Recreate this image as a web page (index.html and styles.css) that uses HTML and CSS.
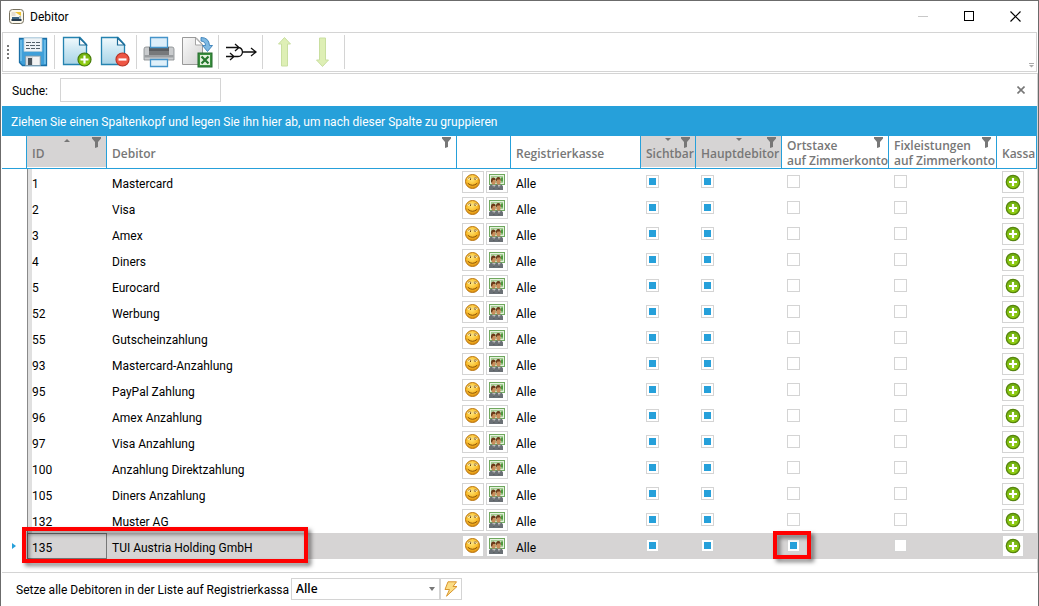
FILE: index.html
```html
<!DOCTYPE html>
<html lang="de">
<head>
<meta charset="utf-8">
<title>Debitor</title>
<link rel="stylesheet" href="styles.css">
</head>
<body>
<svg class="sprite" aria-hidden="true">
  <defs>
    <radialGradient id="g-gold" cx="45%" cy="35%" r="65%"><stop offset="0" stop-color="#ffe67a"/><stop offset=".6" stop-color="#fbbf2c"/><stop offset="1" stop-color="#d98a0c"/></radialGradient>
    <linearGradient id="g-page" x1="0" y1="0" x2="0" y2="1"><stop offset="0" stop-color="#f2fafd"/><stop offset=".5" stop-color="#c9e6f2"/><stop offset="1" stop-color="#a9d3e6"/></linearGradient>
    <linearGradient id="g-grey" x1="0" y1="0" x2="1" y2="1"><stop offset="0" stop-color="#fafafa"/><stop offset="1" stop-color="#d2d2d2"/></linearGradient>
    <linearGradient id="g-green" x1="0" y1="0" x2="0" y2="1"><stop offset="0" stop-color="#6fae12"/><stop offset="1" stop-color="#96d312"/></linearGradient>
  </defs>
  <symbol id="smile" viewBox="0 0 16 16">
    <circle cx="7.500" cy="7.500" r="7" fill="url(#g-gold)" stroke="#b87512"/>
    <path d="M2.800 5.300q1.700-2 3.600-.2M8.700 5.100q1.900-1.800 3.600.2" fill="none" stroke="#fff6c4" stroke-width="2.200"/>
    <path d="M2.800 4.500q1.700-1.600 3.600-.2M8.700 4.300q1.900-1.400 3.600.2" fill="none" stroke="#9a6410" stroke-width=".8"/>
    <path d="M5.500 4.500v1.500M10 4.500v1.500" stroke="#6b4208"/>
    <path d="M2.800 9.300q4.700 4 9.400 0" fill="none" stroke="#8a5208"/>
  </symbol>
  <symbol id="people" viewBox="0 0 16 16">
    <rect x=".5" y=".5" width="15" height="10" fill="#e4f1dc" stroke="#6fa85e"/>
    <rect x="2.500" y="2.500" width="11" height="6" fill="#c6e2b8" stroke="#a3cc94"/>
    <rect x="12" y="3.500" width="2" height="4" fill="#4f9a3e"/>
    <path d="M0 16v-3.500q1-2 3.500-2h2l1 1 1-1H11q2.500 0 3 2V16z" fill="#6a7075"/>
    <path d="M3.500 11l1.200 4 1.200-4zM9 11l1.200 4 1.200-4z" fill="#eee"/>
    <path d="M4.700 11.500v3.500M10.200 11.500v3.500" stroke="#333" stroke-width=".7"/>
    <rect x="2.500" y="5.500" width="4" height="5" rx="1.500" fill="#c98c5a"/>
    <rect x="7.500" y="5" width="4" height="5.500" rx="1.500" fill="#c98c5a"/>
    <path d="M2 8Q1.500 3.500 4.500 3.500 6.700 3.500 6.700 6L4 6 3 8.500zM6.800 8Q6.500 3 9.500 3 12 3 11.800 7.500L11 5.500H8.500z" fill="#6b3a1a"/>
  </symbol>
  <symbol id="plus" viewBox="0 0 16 16">
    <circle cx="8" cy="8" r="6.700" fill="url(#g-green)" stroke="#57850f" stroke-width="1.300"/>
    <path d="M8 4v8M4 8h8" stroke="#fff" stroke-width="2.200"/>
  </symbol>
  <symbol id="funnel" viewBox="0 0 9 11">
    <path d="M0 0h9v1.500L6 5v5l-3 1V5L0 1.500z" fill="#777"/>
  </symbol>
  <symbol id="page" viewBox="0 0 32 32">
    <path d="M2.500 1.500H19l6.500 7V28.500H2.500z" fill="url(#g-page)" stroke="#2583b0" stroke-width="1.300"/>
    <path d="M18.500 2v7h7z" fill="#fff" stroke="#1c6c98" stroke-width="1.200"/>
  </symbol>
</svg>

<div class="window">
  <header class="titlebar">
    <svg class="app-icon" viewBox="0 0 15 15" aria-hidden="true">
      <rect x=".5" y=".5" width="14" height="14" rx="3" fill="#fbf8ec" stroke="#77715f"/>
      <rect x="2.500" y="3" width="4" height="4" fill="#e4ddd0"/><path d="M6 3h6v4l-3-2z" fill="#eec333"/>
      <path d="M3 8h7v2H3z" fill="#3c6482"/><path d="M2.500 10h10v2h-10z" fill="#26394a"/><path d="M10 7h2v3h-2z" fill="#a4b9c6"/>
    </svg>
    <h1 class="title">Debitor</h1>
    <button class="win-btn" type="button" aria-label="Minimieren" disabled><svg viewBox="0 0 11 11"><path d="M0 5.500h10" stroke="#c8c8c8"/></svg></button>
    <button class="win-btn" type="button" aria-label="Maximieren"><svg viewBox="0 0 11 11"><rect x=".5" y=".5" width="9" height="9" fill="none" stroke="#000"/></svg></button>
    <button class="win-btn" type="button" aria-label="Schließen"><svg viewBox="0 0 11 11"><path d="M.5.5l10 10M10.500.5l-10 10" stroke="#000" stroke-width="1.200"/></svg></button>
  </header>

  <div class="toolbar" role="toolbar" aria-label="Debitor">
    <span class="grip"></span>
    <button class="tool" type="button" aria-label="Speichern"><svg viewBox="0 0 32 32">
      <path d="M2.500 2.500h27v27h-24l-3-3z" fill="#3f9fd9" stroke="#1b6fa6" stroke-width="1.300"/>
      <path d="M4 4v21M28 4v24" stroke="#83cbef" stroke-width="1.200"/>
      <path d="M7 2h18v13.500H7z" fill="#eef3f6" stroke="#a9c7d8" stroke-width=".7"/>
      <path d="M9 6.500h5m1 0h3m1 0h4M9 9.500h3m1 0h5m1 0h4M9 12.500h4m1 0h4m1 0h4" stroke="#54626b"/>
      <path d="M8.500 20h15v9.500h-15z" fill="#d9dde0" stroke="#7b99ab" stroke-width=".8"/>
      <path d="M11 22h4v7h-4z" fill="#4a545c"/><path d="M16 21h6v8h-6z" fill="#f3f3f3"/>
    </svg></button>
    <span class="sep"></span>
    <button class="tool" type="button" aria-label="Neu"><svg viewBox="0 0 32 32">
      <use href="#page"/><circle cx="23.500" cy="23.500" r="6.500" fill="url(#g-green)" stroke="#467b08" stroke-width="1.200"/>
      <path d="M23.500 19.500v8M19.500 23.500h8" stroke="#fff" stroke-width="2.200"/>
    </svg></button>
    <button class="tool" type="button" aria-label="Löschen"><svg viewBox="0 0 32 32">
      <use href="#page"/><circle cx="23.500" cy="23.500" r="6.500" fill="#ee5644" stroke="#b93527" stroke-width="1.200"/>
      <path d="M19.500 23.500h8" stroke="#fff" stroke-width="2.200"/>
    </svg></button>
    <span class="sep"></span>
    <button class="tool" type="button" aria-label="Drucken"><svg viewBox="0 0 32 32">
      <path d="M3 11h26q2 0 2 2v11H1V13q0-2 2-2z" fill="#c9cbcd" stroke="#84888b" stroke-width=".8"/>
      <path d="M6 11h20v5H6z" fill="#5a5c5f"/><path d="M1.500 19h29v2.500h-29z" fill="#9b9ea1"/><path d="M6 15h20v4H6z" fill="#77797b"/>
      <path d="M7.500 1.500h17v10h-17z" fill="#dceefa" stroke="#4594c9" stroke-width="1.300"/>
      <path d="M7.500 23.500h17v7h-17z" fill="#dff0fa" stroke="#4594c9" stroke-width="1.300"/>
    </svg></button>
    <button class="tool" type="button" aria-label="Excel-Export"><svg viewBox="0 0 32 32">
      <path d="M1.500 1.500H15l6.500 7V28.500H1.500z" fill="url(#g-grey)" stroke="#999"/>
      <path d="M14.500 2v7h7z" fill="#fff" stroke="#a5a5a5"/>
      <path d="M20 1.500q8 0 8.500 8h3l-5 6-5-6h3q0-4-4.500-4.500z" fill="#7fb9e2" stroke="#3a7fb8" stroke-width=".9"/>
      <rect x="17" y="17" width="14" height="14" fill="#3c9140" stroke="#246a2c"/>
      <rect x="19" y="19" width="10" height="10" fill="#e4f2df"/>
      <path d="M20.500 20.500l7 7m0-7l-7 7" stroke="#26772e" stroke-width="2.200"/>
    </svg></button>
    <span class="sep"></span>
    <button class="tool" type="button" aria-label="Zusammenführen"><svg viewBox="0 0 32 32" fill="none" stroke="#111" stroke-width="1.300">
      <path d="M1 11.500h12q4 0 4.500 4.500h13M4 20.500h9q4 0 4.500-4.500M1 20.500h4M10 8l4 3.500-4 3.500M5 17l4 3.500L5 24M26 12l5 4-5 4"/>
    </svg></button>
    <span class="sep"></span>
    <button class="tool" type="button" aria-label="Nach oben"><svg viewBox="0 0 32 32"><path d="M15.500 1.500l6 6.500h-3v22h-6V8h-3z" fill="#deefb5" stroke="#c9dfa0" stroke-linejoin="round"/></svg></button>
    <button class="tool" type="button" aria-label="Nach unten"><svg viewBox="0 0 32 32"><path d="M15.500 30.500l6-6.500h-3V2h-6v22h-3z" fill="#deefb5" stroke="#c9dfa0" stroke-linejoin="round"/></svg></button>
    <span class="sep"></span>
    <svg class="overflow" viewBox="0 0 5 5" aria-hidden="true"><path d="M0 .5h5" stroke="#aaa"/><path d="M0 2h5L2.500 4.500z" fill="#aaa"/></svg>
  </div>

  <main class="grid">
    <div class="search">
      <label for="q">Suche:</label>
      <input class="search-box" id="q" type="text">
      <button class="search-close" type="button" aria-label="Suche schließen"><svg viewBox="0 0 8 8"><path d="M.5.5l7 7m0-7l-7 7" stroke="#777" stroke-width="1.600"/></svg></button>
    </div>
    <div class="group-bar">Ziehen Sie einen Spaltenkopf und legen Sie ihn hier ab, um nach dieser Spalte zu gruppieren</div>
    <table class="data">
      <colgroup><col class="c-mark"><col class="c-id"><col><col class="c-act"><col class="c-reg"><col class="c-vis"><col class="c-main"><col class="c-tax"><col class="c-fix"><col class="c-kassa"></colgroup>
      <thead>
        <tr>
          <th></th>
          <th class="sorted"><span class="sort up"></span><svg class="funnel"><use href="#funnel"/></svg>ID</th>
          <th><svg class="funnel"><use href="#funnel"/></svg>Debitor</th>
          <th></th>
          <th>Registrierkasse</th>
          <th class="sorted"><span class="sort down"></span><svg class="funnel"><use href="#funnel"/></svg>Sichtbar</th>
          <th class="sorted"><span class="sort down"></span><svg class="funnel"><use href="#funnel"/></svg>Hauptdebitor</th>
          <th><svg class="funnel"><use href="#funnel"/></svg>Ortstaxe<br>auf Zimmerkonto</th>
          <th><svg class="funnel"><use href="#funnel"/></svg>Fixleistungen<br>auf Zimmerkonto</th>
          <th>Kassa</th>
        </tr>
      </thead>
      <tbody>
        <tr><td></td><td>1</td><td>Mastercard</td><td><div class="actions"><button class="cell-btn" type="button" aria-label="Gast"><svg><use href="#smile"/></svg></button><button class="cell-btn" type="button" aria-label="Zahlung"><svg><use href="#people"/></svg></button></div></td><td>Alle</td><td><input type="checkbox" aria-label="Sichtbar" checked></td><td><input type="checkbox" aria-label="Hauptdebitor" checked></td><td><input type="checkbox" aria-label="Ortstaxe"></td><td><input type="checkbox" aria-label="Fixleistungen"></td><td><button class="cell-btn" type="button" aria-label="Kassa"><svg><use href="#plus"/></svg></button></td></tr>
        <tr><td></td><td>2</td><td>Visa</td><td><div class="actions"><button class="cell-btn" type="button" aria-label="Gast"><svg><use href="#smile"/></svg></button><button class="cell-btn" type="button" aria-label="Zahlung"><svg><use href="#people"/></svg></button></div></td><td>Alle</td><td><input type="checkbox" aria-label="Sichtbar" checked></td><td><input type="checkbox" aria-label="Hauptdebitor" checked></td><td><input type="checkbox" aria-label="Ortstaxe"></td><td><input type="checkbox" aria-label="Fixleistungen"></td><td><button class="cell-btn" type="button" aria-label="Kassa"><svg><use href="#plus"/></svg></button></td></tr>
        <tr><td></td><td>3</td><td>Amex</td><td><div class="actions"><button class="cell-btn" type="button" aria-label="Gast"><svg><use href="#smile"/></svg></button><button class="cell-btn" type="button" aria-label="Zahlung"><svg><use href="#people"/></svg></button></div></td><td>Alle</td><td><input type="checkbox" aria-label="Sichtbar" checked></td><td><input type="checkbox" aria-label="Hauptdebitor" checked></td><td><input type="checkbox" aria-label="Ortstaxe"></td><td><input type="checkbox" aria-label="Fixleistungen"></td><td><button class="cell-btn" type="button" aria-label="Kassa"><svg><use href="#plus"/></svg></button></td></tr>
        <tr><td></td><td>4</td><td>Diners</td><td><div class="actions"><button class="cell-btn" type="button" aria-label="Gast"><svg><use href="#smile"/></svg></button><button class="cell-btn" type="button" aria-label="Zahlung"><svg><use href="#people"/></svg></button></div></td><td>Alle</td><td><input type="checkbox" aria-label="Sichtbar" checked></td><td><input type="checkbox" aria-label="Hauptdebitor" checked></td><td><input type="checkbox" aria-label="Ortstaxe"></td><td><input type="checkbox" aria-label="Fixleistungen"></td><td><button class="cell-btn" type="button" aria-label="Kassa"><svg><use href="#plus"/></svg></button></td></tr>
        <tr><td></td><td>5</td><td>Eurocard</td><td><div class="actions"><button class="cell-btn" type="button" aria-label="Gast"><svg><use href="#smile"/></svg></button><button class="cell-btn" type="button" aria-label="Zahlung"><svg><use href="#people"/></svg></button></div></td><td>Alle</td><td><input type="checkbox" aria-label="Sichtbar" checked></td><td><input type="checkbox" aria-label="Hauptdebitor" checked></td><td><input type="checkbox" aria-label="Ortstaxe"></td><td><input type="checkbox" aria-label="Fixleistungen"></td><td><button class="cell-btn" type="button" aria-label="Kassa"><svg><use href="#plus"/></svg></button></td></tr>
        <tr><td></td><td>52</td><td>Werbung</td><td><div class="actions"><button class="cell-btn" type="button" aria-label="Gast"><svg><use href="#smile"/></svg></button><button class="cell-btn" type="button" aria-label="Zahlung"><svg><use href="#people"/></svg></button></div></td><td>Alle</td><td><input type="checkbox" aria-label="Sichtbar" checked></td><td><input type="checkbox" aria-label="Hauptdebitor" checked></td><td><input type="checkbox" aria-label="Ortstaxe"></td><td><input type="checkbox" aria-label="Fixleistungen"></td><td><button class="cell-btn" type="button" aria-label="Kassa"><svg><use href="#plus"/></svg></button></td></tr>
        <tr><td></td><td>55</td><td>Gutscheinzahlung</td><td><div class="actions"><button class="cell-btn" type="button" aria-label="Gast"><svg><use href="#smile"/></svg></button><button class="cell-btn" type="button" aria-label="Zahlung"><svg><use href="#people"/></svg></button></div></td><td>Alle</td><td><input type="checkbox" aria-label="Sichtbar" checked></td><td><input type="checkbox" aria-label="Hauptdebitor" checked></td><td><input type="checkbox" aria-label="Ortstaxe"></td><td><input type="checkbox" aria-label="Fixleistungen"></td><td><button class="cell-btn" type="button" aria-label="Kassa"><svg><use href="#plus"/></svg></button></td></tr>
        <tr><td></td><td>93</td><td>Mastercard-Anzahlung</td><td><div class="actions"><button class="cell-btn" type="button" aria-label="Gast"><svg><use href="#smile"/></svg></button><button class="cell-btn" type="button" aria-label="Zahlung"><svg><use href="#people"/></svg></button></div></td><td>Alle</td><td><input type="checkbox" aria-label="Sichtbar" checked></td><td><input type="checkbox" aria-label="Hauptdebitor" checked></td><td><input type="checkbox" aria-label="Ortstaxe"></td><td><input type="checkbox" aria-label="Fixleistungen"></td><td><button class="cell-btn" type="button" aria-label="Kassa"><svg><use href="#plus"/></svg></button></td></tr>
        <tr><td></td><td>95</td><td>PayPal Zahlung</td><td><div class="actions"><button class="cell-btn" type="button" aria-label="Gast"><svg><use href="#smile"/></svg></button><button class="cell-btn" type="button" aria-label="Zahlung"><svg><use href="#people"/></svg></button></div></td><td>Alle</td><td><input type="checkbox" aria-label="Sichtbar" checked></td><td><input type="checkbox" aria-label="Hauptdebitor" checked></td><td><input type="checkbox" aria-label="Ortstaxe"></td><td><input type="checkbox" aria-label="Fixleistungen"></td><td><button class="cell-btn" type="button" aria-label="Kassa"><svg><use href="#plus"/></svg></button></td></tr>
        <tr><td></td><td>96</td><td>Amex Anzahlung</td><td><div class="actions"><button class="cell-btn" type="button" aria-label="Gast"><svg><use href="#smile"/></svg></button><button class="cell-btn" type="button" aria-label="Zahlung"><svg><use href="#people"/></svg></button></div></td><td>Alle</td><td><input type="checkbox" aria-label="Sichtbar" checked></td><td><input type="checkbox" aria-label="Hauptdebitor" checked></td><td><input type="checkbox" aria-label="Ortstaxe"></td><td><input type="checkbox" aria-label="Fixleistungen"></td><td><button class="cell-btn" type="button" aria-label="Kassa"><svg><use href="#plus"/></svg></button></td></tr>
        <tr><td></td><td>97</td><td>Visa Anzahlung</td><td><div class="actions"><button class="cell-btn" type="button" aria-label="Gast"><svg><use href="#smile"/></svg></button><button class="cell-btn" type="button" aria-label="Zahlung"><svg><use href="#people"/></svg></button></div></td><td>Alle</td><td><input type="checkbox" aria-label="Sichtbar" checked></td><td><input type="checkbox" aria-label="Hauptdebitor" checked></td><td><input type="checkbox" aria-label="Ortstaxe"></td><td><input type="checkbox" aria-label="Fixleistungen"></td><td><button class="cell-btn" type="button" aria-label="Kassa"><svg><use href="#plus"/></svg></button></td></tr>
        <tr><td></td><td>100</td><td>Anzahlung Direktzahlung</td><td><div class="actions"><button class="cell-btn" type="button" aria-label="Gast"><svg><use href="#smile"/></svg></button><button class="cell-btn" type="button" aria-label="Zahlung"><svg><use href="#people"/></svg></button></div></td><td>Alle</td><td><input type="checkbox" aria-label="Sichtbar" checked></td><td><input type="checkbox" aria-label="Hauptdebitor" checked></td><td><input type="checkbox" aria-label="Ortstaxe"></td><td><input type="checkbox" aria-label="Fixleistungen"></td><td><button class="cell-btn" type="button" aria-label="Kassa"><svg><use href="#plus"/></svg></button></td></tr>
        <tr><td></td><td>105</td><td>Diners Anzahlung</td><td><div class="actions"><button class="cell-btn" type="button" aria-label="Gast"><svg><use href="#smile"/></svg></button><button class="cell-btn" type="button" aria-label="Zahlung"><svg><use href="#people"/></svg></button></div></td><td>Alle</td><td><input type="checkbox" aria-label="Sichtbar" checked></td><td><input type="checkbox" aria-label="Hauptdebitor" checked></td><td><input type="checkbox" aria-label="Ortstaxe"></td><td><input type="checkbox" aria-label="Fixleistungen"></td><td><button class="cell-btn" type="button" aria-label="Kassa"><svg><use href="#plus"/></svg></button></td></tr>
        <tr><td></td><td>132</td><td>Muster AG</td><td><div class="actions"><button class="cell-btn" type="button" aria-label="Gast"><svg><use href="#smile"/></svg></button><button class="cell-btn" type="button" aria-label="Zahlung"><svg><use href="#people"/></svg></button></div></td><td>Alle</td><td><input type="checkbox" aria-label="Sichtbar" checked></td><td><input type="checkbox" aria-label="Hauptdebitor" checked></td><td><input type="checkbox" aria-label="Ortstaxe"></td><td><input type="checkbox" aria-label="Fixleistungen"></td><td><button class="cell-btn" type="button" aria-label="Kassa"><svg><use href="#plus"/></svg></button></td></tr>
        <tr class="selected"><td><span class="marker"></span></td><td>135<span class="callout callout-name"></span></td><td>TUI Austria Holding GmbH</td><td><div class="actions"><button class="cell-btn" type="button" aria-label="Gast"><svg><use href="#smile"/></svg></button><button class="cell-btn" type="button" aria-label="Zahlung"><svg><use href="#people"/></svg></button></div></td><td>Alle</td><td><input type="checkbox" aria-label="Sichtbar" checked></td><td><input type="checkbox" aria-label="Hauptdebitor" checked></td><td><input type="checkbox" aria-label="Ortstaxe" checked><span class="callout callout-check"></span></td><td><input type="checkbox" aria-label="Fixleistungen"></td><td><button class="cell-btn" type="button" aria-label="Kassa"><svg><use href="#plus"/></svg></button></td></tr>
      </tbody>
    </table>
  </main>

  <footer class="footer">
    <label for="kassa">Setze alle Debitoren in der Liste auf Registrierkassa</label>
    <div class="combo">
      <span class="combo-field"><select id="kassa"><option>Alle</option></select></span>
      <button class="cell-btn" type="button" aria-label="Anwenden"><svg viewBox="0 0 16 16"><path d="M5 .8h8.500L10 5.500h4L3.500 15.200 6.500 8.500H2z" fill="#fbdc83" stroke="#d9962f" stroke-linejoin="round"/></svg></button>
    </div>
  </footer>
</div>
</body>
</html>
```
FILE: styles.css
```css
:root {
  --blue: #26a0da;
  --line: #d4d4d4;
  --shade: #d6d4d4;
  --frame: #6b6b6b;
  --heading: "Open Sans", "Noto Sans", sans-serif;
}

* { box-sizing: border-box; }

body {
  margin: 0;
  background: #fff;
  color: #000;
  font: 12px/16px Roboto, "Open Sans", sans-serif;
}

button, input, select { font: inherit; color: inherit; margin: 0; }
button { padding: 0; border: 0; background: none; }
svg { display: block; }
.sprite { position: absolute; width: 0; height: 0; }

.window {
  min-height: 100vh;
  border: solid var(--frame);
  border-width: 1px 1px 0;
}

.titlebar { display: flex; align-items: center; height: 30px; padding-left: 8px; }
.app-icon { width: 15px; height: 15px; }
.title { flex: 1; margin: 0 0 0 6px; padding-top: 1px; font-size: 12px; font-weight: 400; }
.win-btn { display: flex; justify-content: center; width: 46px; }
.win-btn svg { width: 11px; height: 11px; }

.toolbar {
  display: flex;
  align-items: center;
  height: 40px;
  margin: 1px;
  padding-left: 4px;
  border: 1px solid var(--line);
}
.grip {
  width: 2px;
  height: 14px;
  margin-right: 5px;
  background: repeating-linear-gradient(#777 0 2px, transparent 2px 4px);
}
.tool { display: flex; justify-content: center; width: 38px; }
.tool svg { width: 32px; height: 32px; }
.sep { width: 1px; height: 34px; margin: 0 3px 0 2px; background: var(--line); }
.overflow { width: 5px; height: 5px; margin: auto 2px 3px auto; }

.grid {
  margin-left: 1px;
  padding-bottom: 13px;
  border: 1px solid var(--line);
  border-left: 0;
}

.search { display: flex; align-items: center; height: 32px; padding: 0 12px 0 10px; }
.search label { width: 48px; padding-top: 2px; }
.search-box { width: 161px; height: 24px; padding: 0 4px; border: 1px solid var(--line); }
.search-close { margin-left: auto; }
.search-close svg { width: 8px; height: 8px; }

.group-bar { padding: 8px 9px 6px; background: var(--blue); color: #fff; }

.data { width: 100%; table-layout: fixed; border-collapse: separate; border-spacing: 0; }
.c-mark { width: 25px; }
.c-id { width: 80px; }
.c-act { width: 54px; }
.c-reg { width: 130px; }
.c-vis { width: 55px; }
.c-main { width: 86px; }
.c-tax { width: 107px; }
.c-fix { width: 108px; }
.c-kassa { width: 40px; }

.data th {
  position: relative;
  height: 33px;
  padding: 2px 0 0 5px;
  border: solid var(--blue);
  border-width: 0 1px 1px 0;
  color: #777;
  font: 600 12px/15px var(--heading);
  text-align: left;
  white-space: nowrap;
}
.data th.sorted { background: linear-gradient(var(--shade), var(--shade)) 0 0 / 100% 31px no-repeat; }
.funnel { position: absolute; top: 1px; right: 5px; width: 9px; height: 11px; }
.sort { position: absolute; top: 2px; left: 50%; margin-left: -3px; border: 3px solid transparent; }
.sort.up { top: 0; border-bottom-color: #777; }
.sort.down { border-top-color: #777; }

.data td { position: relative; height: 26px; padding: 0 0 0 5px; white-space: nowrap; }
.data td:nth-child(2),
.data td:nth-child(3),
.data td:nth-child(5) { padding-top: 3px; }
.data td:nth-child(n + 6):nth-child(-n + 9) { padding-bottom: 2px; }
.data td:nth-child(2) {
  border-left: 1px solid #8a8a8a;
  padding-left: 4px;
  background: linear-gradient(#e0e0e0, #e0e0e0) 0 0 / 4px 100% no-repeat;
}
.data .selected td { background: var(--shade); }
.data .selected td:first-child { background: none; }
.data .selected td:nth-child(2) { border: 1px solid #777; }

.actions { display: flex; gap: 2px; }
.cell-btn {
  display: flex;
  align-items: center;
  justify-content: center;
  width: 22px;
  height: 22px;
  border: 1px solid var(--line);
  background: #fff;
}
.cell-btn svg { width: 16px; height: 16px; }

.data input {
  display: block;
  width: 13px;
  height: 13px;
  appearance: none;
  border: 1px solid var(--line);
  background: #fff;
}
.data input:checked { background: linear-gradient(var(--blue), var(--blue)) center / 7px 7px no-repeat #fff; }

.marker {
  display: block;
  width: 0;
  margin-left: 5px;
  border: solid transparent;
  border-width: 3px 0 3px 4px;
  border-left-color: var(--blue);
}

.callout {
  position: absolute;
  z-index: 1;
  border: 4px solid #f00;
  filter: drop-shadow(3px 3px 2px rgba(0, 0, 0, .5));
  pointer-events: none;
}
.callout-name { top: -7px; left: -6px; width: 286px; height: 36px; }
.callout-check { top: -2px; left: -9px; width: 38px; height: 28px; }

.footer { display: flex; align-items: center; gap: 2px; padding: 5px 15px; }
.footer label { padding-top: 1px; }
.combo { display: flex; }
.combo-field { position: relative; }
.combo-field::after {
  content: "";
  position: absolute;
  top: 9px;
  right: 5px;
  border: solid transparent;
  border-width: 4px 3px 0;
  border-top-color: #777;
  pointer-events: none;
}
.combo select {
  display: block;
  width: 149px;
  height: 22px;
  padding: 0 4px;
  appearance: none;
  border: 1px solid var(--line);
  border-radius: 0;
  background: #fff;
  font: 600 12px/16px var(--heading);
}
```
